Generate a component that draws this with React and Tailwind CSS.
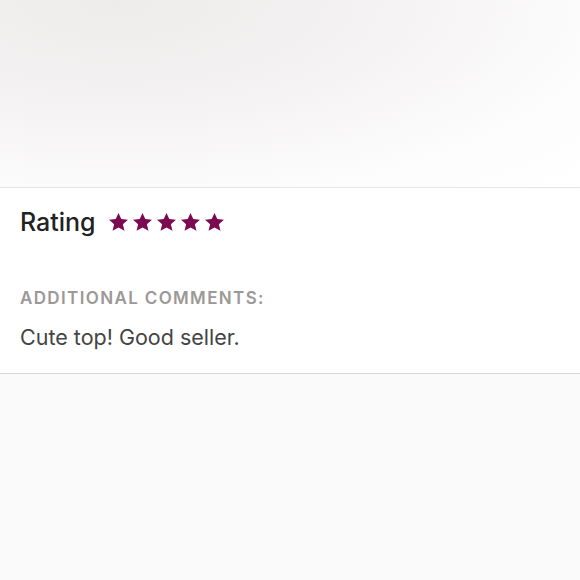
import React from "react";

const Star = () => (
  <svg width="21" height="21" viewBox="0 0 24 24" className="block">
    <path
      d="M12 1l3.2 7.1 7.6.7-5.8 5.1 1.8 7.6L12 17.6l-6.8 3.9 1.8-7.6-5.8-5.1 7.6-.7z"
      fill="#7b0a52"
    />
  </svg>
);

export default function App() {
  return (
    <div
      className="w-[580px] h-[580px] flex flex-col bg-[#fbfafa] overflow-hidden"
      style={{ fontFamily: "Inter, 'Open Sans', sans-serif" }}
    >
      <div className="h-[187px] shrink-0 bg-[radial-gradient(ellipse_at_20%_0%,#eeeceb_0%,#f4f2f2_40%,#fdfcfc_75%,#ffffff_100%)]" />
      <div className="shrink-0 bg-white border-t border-[#e6e4e4] border-b border-b-[#d9d5d6] h-[187px] px-5 pt-[18px]">
        <div className="flex items-center h-[33px]">
          <span className="text-[25px] font-medium text-[#222222] leading-none">Rating</span>
          <div className="flex items-center gap-[3px] ml-[12px]">
            <Star />
            <Star />
            <Star />
            <Star />
            <Star />
          </div>
        </div>
        <div className="mt-[51px] text-[17px] font-semibold tracking-[0.08em] text-[#9b9897] leading-none">
          ADDITIONAL COMMENTS:
        </div>
        <div className="mt-[20px] text-[21.5px] text-[#444444] leading-none">
          Cute top! Good seller.
        </div>
      </div>
      <div className="flex-1 bg-[#fbfafa]" />
    </div>
  );
}
